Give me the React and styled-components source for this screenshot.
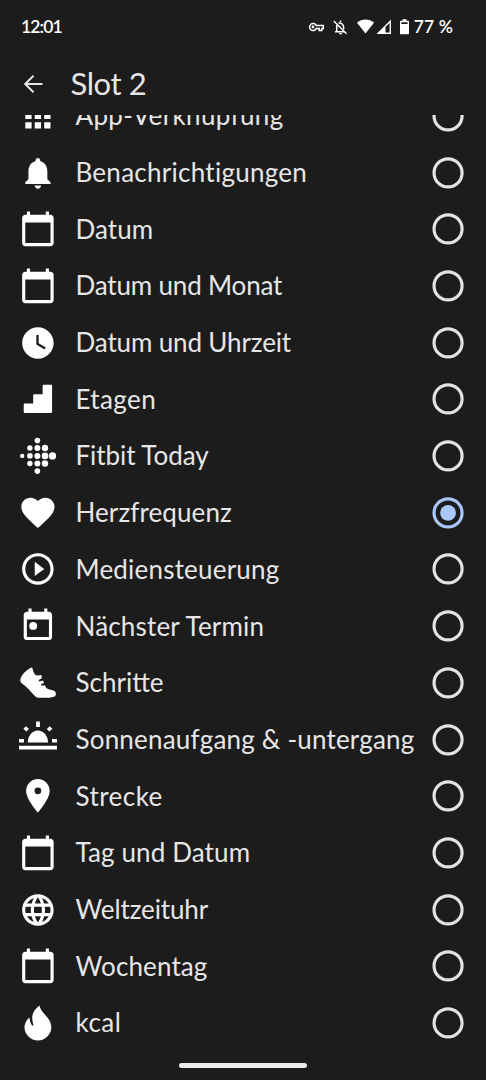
import React from "react";
import styled, { createGlobalStyle } from "styled-components";

const GlobalStyle = createGlobalStyle`
  * { box-sizing: border-box; }
  body { margin: 0; background: #1c1c1c; }
`;

const Screen = styled.div`
  width: 486px;
  height: 1080px;
  display: flex;
  flex-direction: column;
  overflow: hidden;
  background: #1c1c1c;
  color: #e6e6e6;
  font-family: Lato, "Liberation Sans", sans-serif;
`;

const StatusBar = styled.header`
  flex: none;
  height: 54px;
  padding: 0 33px 0 21px;
  display: flex;
  align-items: center;
  justify-content: space-between;
  color: #fff;
`;

const StatusText = styled.span`
  font-size: 17.5px;
  font-weight: 600;
  line-height: 20px;
  letter-spacing: ${(p) => p.$spacing || 0}px;
  white-space: pre;
`;

const StatusIcons = styled.div`
  display: flex;
  align-items: center;
`;

const StatusSvg = styled.svg`
  display: block;
  flex: none;
  margin-right: ${(p) => p.$gap || 0}px;
`;

const TitleBar = styled.div`
  flex: none;
  height: 61px;
  padding: 0 0 0 23px;
  display: flex;
  align-items: center;
`;

const BackIcon = styled.svg`
  display: block;
  width: 20px;
  height: 20px;
  margin-right: 27.5px;
  margin-bottom: 2px;
`;

const Title = styled.h1`
  margin: 0 0 4px;
  font-size: 31px;
  font-weight: 400;
  line-height: 40px;
  letter-spacing: -0.4px;
`;

const ListViewport = styled.main`
  flex: none;
  height: 937px;
  overflow: hidden;
`;

const List = styled.ul`
  list-style: none;
  margin: -27.5px 0 0;
  padding: 0;
`;

const Row = styled.li`
  height: 56.7px;
  padding: 0 18.8px 0 18.9px;
  display: flex;
  align-items: center;
`;

const RowIcon = styled.svg`
  display: block;
  flex: none;
  width: 37.8px;
  height: 37.8px;
  fill: #fff;
  overflow: visible;
`;

const Label = styled.span`
  flex: 1;
  padding-left: 18.8px;
  padding-bottom: 1px;
  font-size: 26px;
  line-height: 34px;
  white-space: nowrap;
  letter-spacing: ${(p) => p.$spacing || 0}px;
`;

const Radio = styled.svg`
  display: block;
  flex: none;
  width: 37.8px;
  height: 37.8px;
  fill: none;
  stroke: ${(p) => (p.$on ? "#a8c8fa" : "#e3e3e3")};
  stroke-width: 2;
`;

const RadioDot = styled.circle`
  fill: #a8c8fa;
  stroke: none;
`;

const NavArea = styled.footer`
  flex: 1;
  display: flex;
  justify-content: center;
  padding-top: 11px;
`;

const NavHandle = styled.div`
  width: 128px;
  height: 5px;
  border-radius: 3px;
  background: #ececec;
`;

const calendar = (
  <path d="M20 3h-1V1h-2v2H7V1H5v2H4c-1.1 0-2 .9-2 2v16c0 1.1.9 2 2 2h16c1.1 0 2-.9 2-2V5c0-1.1-.9-2-2-2zm0 18H4V8h16v13z" />
);

const fitbitDots = [
  [3.2, 18.9, 2.2],
  [10.9, 11, 2.7], [10.9, 18.9, 2.8], [10.9, 26.5, 2.7],
  [18.4, 3.6, 2.8], [18.4, 11, 3], [18.4, 18.9, 3], [18.4, 26.5, 3], [18.4, 34.1, 2.8],
  [26, 11, 3.2], [26, 18.9, 3.3], [26, 26.5, 3.2],
  [33.5, 18.9, 3.7],
];

const icons = {
  apps: {
    art: <path d="M4 8h4V4H4v4zm6 12h4v-4h-4v4zm-6 0h4v-4H4v4zm0-6h4v-4H4v4zm6 0h4v-4h-4v4zm6-10v4h4V4h-4zm-6 4h4V4h-4v4zm6 6h4v-4h-4v4zm0 6h4v-4h-4v4z" />,
  },
  bell: {
    art: <path d="M12 22c1.1 0 2-.9 2-2h-4c0 1.1.89 2 2 2zm6-6v-5c0-3.07-1.64-5.64-4.5-6.32V4c0-.83-.67-1.5-1.5-1.5s-1.5.67-1.5 1.5v.68C7.63 5.36 6 7.92 6 11v5l-2 2v1h16v-1l-2-2z" />,
  },
  calendar: { art: calendar },
  clock: {
    art: <path d="M12 2C6.5 2 2 6.5 2 12s4.5 10 10 10 10-4.5 10-10S17.5 2 12 2zm4.2 14.2L11 13V7h1.5v5.2l4.5 2.7-.8 1.3z" />,
  },
  stairs: {
    art: <path d="M15.7 3h4.6a.7.7 0 0 1 .7.7v16.6a.7.7 0 0 1-.7.7H3.7a.7.7 0 0 1-.7-.7v-4.6a.7.7 0 0 1 .7-.7H9V9.700a.7.7 0 0 1 .7-.7H15V3.700a.7.7 0 0 1 .7-.7z" />,
  },
  fitbit: {
    box: "0 0 37.8 37.8",
    art: fitbitDots.map(([cx, cy, r]) => <circle key={`${cx}-${cy}`} cx={cx} cy={cy} r={r} />),
  },
  heart: {
    box: "0.6 0.8 22.8 22.8",
    art: <path d="M12 21.35l-1.45-1.32C5.4 15.36 2 12.28 2 8.5 2 5.42 4.42 3 7.500 3c1.74 0 3.41.81 4.5 2.090C13.09 3.810 14.76 3 16.5 3 19.58 3 22 5.420 22 8.5c0 3.780-3.4 6.860-8.55 11.540L12 21.350z" />,
  },
  play: {
    art: <path d="M10 16.5l6-4.5-6-4.500v9zM12 2C6.480 2 2 6.480 2 12s4.480 10 10 10 10-4.480 10-10S17.520 2 12 2zm0 18c-4.410 0-8-3.590-8-8s3.590-8 8-8 8 3.590 8 8-3.590 8-8 8z" />,
  },
  today: {
    art: (
      <>
        <path d="M19 3h-1V1h-2v2H8V1H6v2H5c-1.110 0-2 .9-2 2v14c0 1.100.890 2 2 2h14c1.100 0 2-.9 2-2V5c0-1.100-.9-2-2-2zm0 16H5V8h14v11z" />
        <circle cx="9" cy="12" r="2.5" />
      </>
    ),
  },
  shoe: {
    box: "0 0 37.8 37.8",
    art: <path d="M12.100 3.700C8 5.500 3.500 9.500 1.700 14.300C.9 16.500 1.200 18.300 3 19.500C8 22.500 12 28.200 16.200 32.200C17.400 33.400 18.500 33.800 20.300 33.800H28C31 33.800 34.500 33.200 36.200 32.300C37.200 30.500 37.200 28.300 35.800 27.300C33 25.700 29.500 25.700 27.200 24L25.900 21.200L22.600 21.700L22 20.400L25 18.700L24 16.600L20.200 17.600L19.600 16L22.800 14.200L22.500 10.900L17.500 11.600C15.200 10.600 14.200 7.500 13.600 4.700C13.400 3.800 12.900 3.400 12.100 3.700Z" />,
  },
  sunrise: {
    box: "0 0 37.8 37.8",
    art: (
      <>
        <path d="M8.700 21.500a10.200 12 0 0 1 20.400 0zM0 17.900h5v3.600H0zM33 17.900h5v3.600h-5zM0 24.800h38v3.600H0zM17.100.500h3.800v5.500h-3.800z" />
        <path d="M4.400 7.700L7 5.200l3 2.900-2.600 2.400zM33.400 7.700l-2.600-2.500-3 2.900 2.600 2.400z" />
      </>
    ),
  },
  pin: {
    box: "0.750 0.750 22.5 22.5",
    art: <path fillRule="evenodd" d="M12 2C8.130 2 5 5.130 5 9c0 5.250 7 13 7 13s7-7.750 7-13c0-3.870-3.130-7-7-7zm0 5a2 2 0 1 0 0 4 2 2 0 0 0 0-4z" />,
  },
  globe: {
    art: <path d="M11.990 2C6.470 2 2 6.480 2 12s4.470 10 9.990 10C17.520 22 22 17.520 22 12S17.520 2 11.990 2zm6.930 6h-2.950c-.32-1.250-.78-2.450-1.380-3.560 1.840.63 3.370 1.910 4.330 3.560zM12 4.040c.83 1.200 1.480 2.530 1.910 3.960h-3.820c.43-1.430 1.080-2.760 1.910-3.960zM4.260 14C4.100 13.360 4 12.690 4 12s.1-1.360.26-2h3.380c-.08.66-.14 1.320-.14 2 0 .68.06 1.340.14 2H4.260zm.82 2h2.950c.32 1.250.78 2.450 1.380 3.560-1.840-.63-3.370-1.900-4.330-3.560zm2.950-8H5.080c.96-1.660 2.490-2.930 4.330-3.560C8.810 5.550 8.350 6.750 8.030 8zM12 19.960c-.83-1.200-1.480-2.530-1.910-3.960h3.820c-.43 1.430-1.080 2.760-1.910 3.960zM14.340 14H9.660c-.09-.66-.16-1.320-.16-2 0-.68.07-1.350.16-2h4.680c.09.65.16 1.320.16 2 0 .68-.07 1.340-.16 2zm.25 5.560c.6-1.110 1.060-2.310 1.380-3.560h2.950c-.96 1.650-2.490 2.930-4.330 3.560zM16.360 14c.08-.66.14-1.320.14-2 0-.68-.06-1.340-.14-2h3.380c.16.64.26 1.310.26 2s-.1 1.360-.26 2h-3.380z" />,
  },
  flame: {
    box: "0 0 37.8 37.8",
    art: <path d="M20.700 1.400C20.700 8 32.300 13.500 32.300 23A13.400 13.400 0 0 1 5.500 23C5.500 19.500 7.500 15.800 10.400 13.400C11 16.500 11.300 19.200 12.800 21C13.700 22.100 14.700 21.800 14.300 20.500C12.300 14 12.500 7 20.700 1.400Z" />,
  },
};

const items = [
  { icon: "apps", label: "App-Verknüpfung", spacing: 0.37 },
  { icon: "bell", label: "Benachrichtigungen", spacing: 0.27 },
  { icon: "calendar", label: "Datum", spacing: 0.05 },
  { icon: "calendar", label: "Datum und Monat", spacing: -0.17 },
  { icon: "clock", label: "Datum und Uhrzeit", spacing: -0.14 },
  { icon: "stairs", label: "Etagen", spacing: 0.4 },
  { icon: "fitbit", label: "Fitbit Today", spacing: -0.05 },
  { icon: "heart", label: "Herzfrequenz", spacing: 0.1, selected: true },
  { icon: "play", label: "Mediensteuerung", spacing: 0.2 },
  { icon: "today", label: "Nächster Termin", spacing: 0.19 },
  { icon: "shoe", label: "Schritte", spacing: 0 },
  { icon: "sunrise", label: "Sonnenaufgang & -untergang", spacing: 0.2 },
  { icon: "pin", label: "Strecke", spacing: 0.45 },
  { icon: "calendar", label: "Tag und Datum", spacing: 0.12 },
  { icon: "globe", label: "Weltzeituhr", spacing: -0.12 },
  { icon: "calendar", label: "Wochentag", spacing: 0.12 },
  { icon: "flame", label: "kcal", spacing: 0.45 },
];

function OptionRow({ icon, label, spacing, selected }) {
  const { art, box } = icons[icon];
  return (
    <Row>
      <RowIcon viewBox={box || "0 0 24 24"}>{art}</RowIcon>
      <Label $spacing={spacing}>{label}</Label>
      <Radio viewBox="0 0 24 24" $on={selected}>
        <circle cx="12.1" cy="12" r="8.900" />
        {selected && <RadioDot cx="12.1" cy="12" r="5" />}
      </Radio>
    </Row>
  );
}

function Status() {
  return (
    <StatusBar>
      <StatusText $spacing={-0.85}>12:01</StatusText>
      <StatusIcons>
        <StatusSvg width="91" height="20" viewBox="0 0 91 20" fill="none" stroke="#fff">
          <path strokeWidth="1.5" d="M8.200 8.400H15.300V11.600H13.800V13.600H11.200V11.600H8.200A3.500 3.500 0 1 1 8.200 8.400Z" />
          <circle cx="5" cy="10" r="1.400" fill="#fff" stroke="none" />
          <path strokeWidth="1.500" d="M25.800 4L38.500 16.700M28.700 8V14.500M27 14.700H36M30.500 6.200A4 4 0 0 1 35.600 10V12.200M32.500 3.500V5" />
          <path fill="#fff" stroke="none" d="M31 16h3a1.500 1.500 0 0 1-3 0z" />
          <path fill="#fff" stroke="none" d="M49 5.700C54 1.300 61 1.300 66 5.700L57.500 16.500Z" />
          <path fill="#fff" stroke="none" fillRule="evenodd" d="M83 2.500V17H68.500ZM81.600 6V15.600H77.500V10.100Z" />
        </StatusSvg>
        <StatusSvg $gap={3.500} width="11" height="20" viewBox="0 0 11 20" fill="#fff">
          <path fillRule="evenodd" d="M3.500 2.300H7.500V3.800H9.300A.8.8 0 0 1 10 4.600V16.500A.8.8 0 0 1 9.300 17.300H1.700A.8.8 0 0 1 1 16.500V4.600A.8.8 0 0 1 1.700 3.800H3.500ZM2.400 5.300V7H8.600V5.300Z" />
        </StatusSvg>
        <StatusText $spacing={0.1}>77 %</StatusText>
      </StatusIcons>
    </StatusBar>
  );
}

export default function App() {
  return (
    <>
      <GlobalStyle />
      <Screen>
        <Status />
        <TitleBar>
          <BackIcon viewBox="0 0 20 20" fill="none" stroke="#e6e6e6" strokeWidth="2">
            <path d="M19.500 10H2.500M10.500 1.700L2.200 10L10.500 18.300" />
          </BackIcon>
          <Title>Slot 2</Title>
        </TitleBar>
        <ListViewport>
          <List>
            {items.map((item) => (
              <OptionRow key={item.label} {...item} />
            ))}
          </List>
        </ListViewport>
        <NavArea>
          <NavHandle />
        </NavArea>
      </Screen>
    </>
  );
}
